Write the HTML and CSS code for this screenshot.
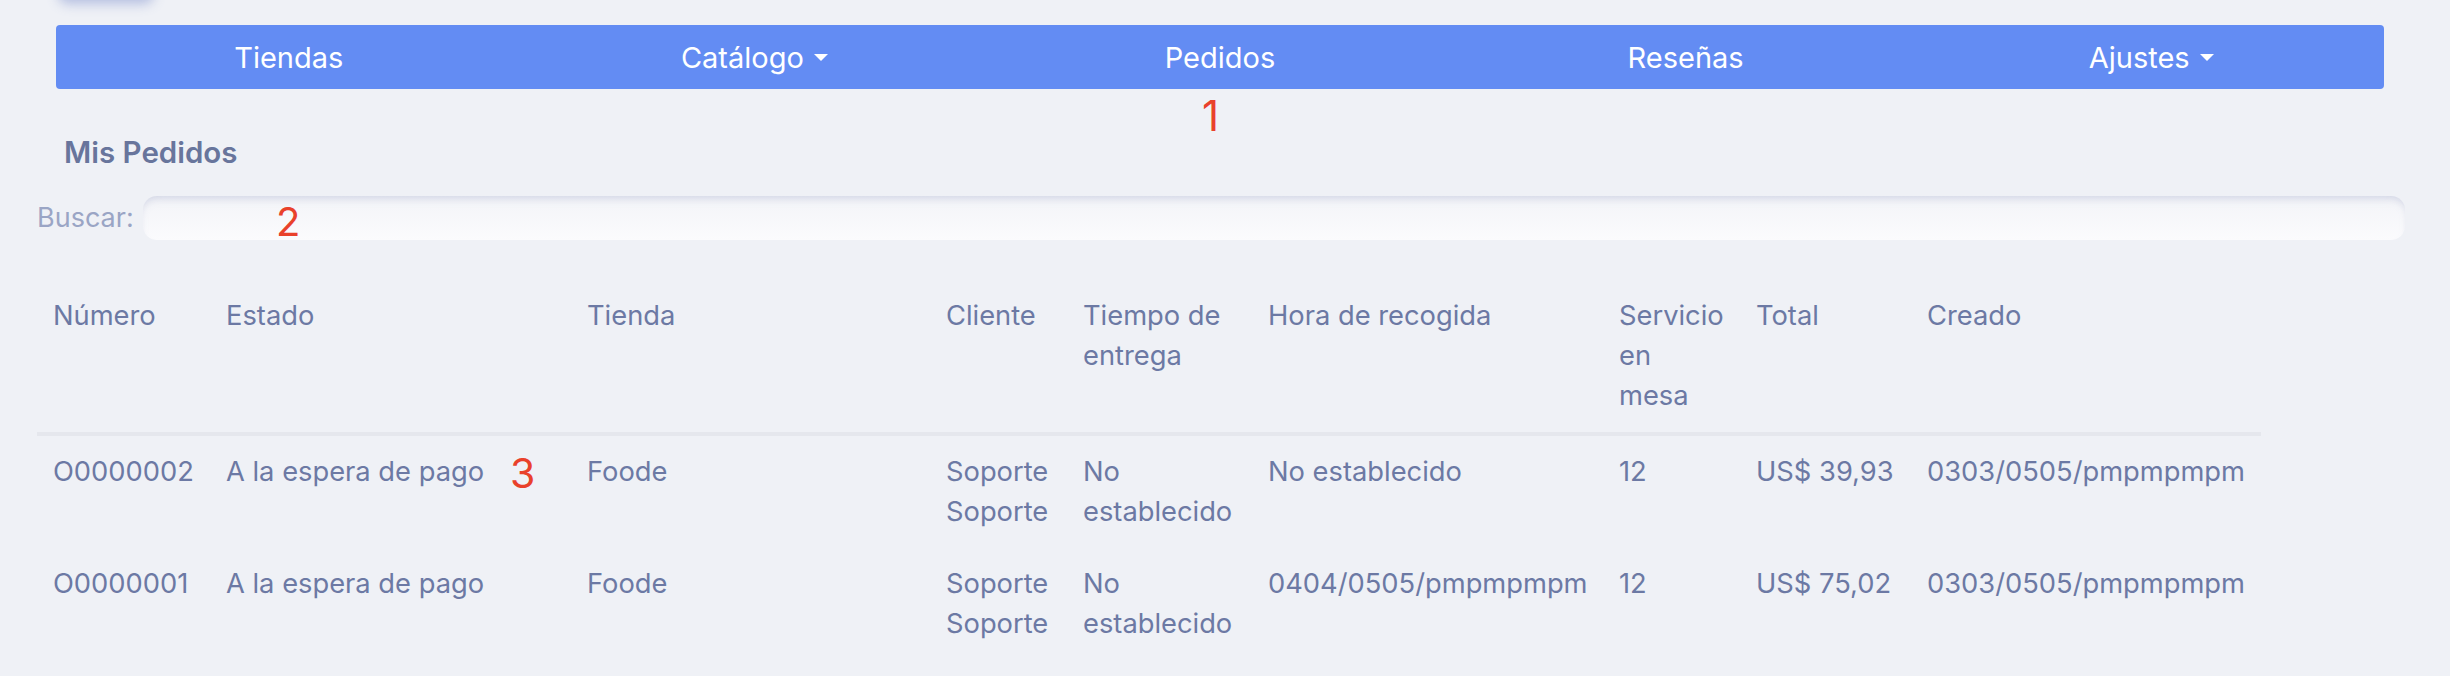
FILE: index.html
```html
<!DOCTYPE html>
<html lang="es">
<head>
<meta charset="utf-8">
<title>Mis Pedidos</title>
<link rel="stylesheet" href="styles.css">
</head>
<body>
<div class="ghost-btn"></div>
<nav class="menu">
  <a class="menu-item">Tiendas</a>
  <a class="menu-item">Catálogo<span class="caret"></span></a>
  <a class="menu-item">Pedidos</a>
  <a class="menu-item">Reseñas</a>
  <a class="menu-item">Ajustes<span class="caret"></span></a>
</nav>
<h2 class="title">Mis Pedidos</h2>
<div class="search">
  <label class="search-label">Buscar:</label>
  <input class="search-input" type="text">
</div>
<table class="orders">
  <colgroup>
    <col class="c-num"><col class="c-estado"><col class="c-tienda"><col class="c-cliente"><col class="c-tiempo"><col class="c-hora"><col class="c-serv"><col class="c-total"><col class="c-creado">
  </colgroup>
  <thead>
    <tr>
      <th>Número</th>
      <th>Estado</th>
      <th>Tienda</th>
      <th>Cliente</th>
      <th>Tiempo de entrega</th>
      <th>Hora de recogida</th>
      <th><span class="stack">Servicio en mesa</span></th>
      <th>Total</th>
      <th>Creado</th>
    </tr>
  </thead>
  <tbody>
    <tr>
      <td>O0000002</td>
      <td>A la espera de pago</td>
      <td>Foode</td>
      <td>Soporte Soporte</td>
      <td>No establecido</td>
      <td class="nw">No establecido</td>
      <td>12</td>
      <td class="nw">US$ 39,93</td>
      <td class="nw">0303/0505/pmpmpmpm</td>
    </tr>
    <tr>
      <td>O0000001</td>
      <td>A la espera de pago</td>
      <td>Foode</td>
      <td>Soporte Soporte</td>
      <td>No establecido</td>
      <td class="nw">0404/0505/pmpmpmpm</td>
      <td>12</td>
      <td class="nw">US$ 75,02</td>
      <td class="nw">0303/0505/pmpmpmpm</td>
    </tr>
  </tbody>
</table>
<span class="mark mark-1">1</span>
<span class="mark mark-2">2</span>
<span class="mark mark-3">3</span>
</body>
</html>
```
FILE: styles.css
```css
html, body {
  margin: 0;
  padding: 0;
}
body {
  background: #eff1f6;
  font-family: Inter, "Noto Sans", sans-serif;
  color: #6c79a4;
  width: 2450px;
  height: 676px;
  overflow: hidden;
  position: relative;
}
.ghost-btn {
  width: 96px;
  height: 30px;
  margin: -30px 0 0 58px;
  border-radius: 10px;
  background: #eff1f6;
  box-shadow: 0 4px 12px rgba(110, 130, 200, 0.45);
}
.menu {
  display: flex;
  margin: 25px 0 0 56px;
  width: 2328px;
  height: 64px;
  background: #638cf3;
  border-radius: 4px;
}
.menu-item {
  flex: 1;
  display: flex;
  align-items: center;
  justify-content: center;
  color: #ffffff;
  font-size: 29px;
  cursor: pointer;
}
.caret {
  display: inline-block;
  width: 0;
  height: 0;
  margin-left: 10px;
  border-top: 7px solid #ffffff;
  border-left: 7px solid transparent;
  border-right: 7px solid transparent;
}
.title {
  margin: 43px 0 0 64px;
  font-size: 29.5px;
  line-height: 40px;
  font-weight: 600;
  color: #68759c;
}
.search {
  display: flex;
  align-items: center;
  margin: 24px 0 0 37px;
  width: 2368px;
  gap: 9px;
}
.search-label {
  font-size: 27px;
  line-height: 40px;
  color: #9aa5c5;
}
.search-input {
  flex: 1;
  height: 44px;
  box-sizing: border-box;
  border: none;
  border-radius: 14px;
  background: linear-gradient(#f3f4f8, #fbfbfd);
  box-shadow: inset 0 6px 8px -4px rgba(140, 150, 190, 0.35);
  outline: none;
}
.orders {
  margin: 40px 0 0 37px;
  border-collapse: collapse;
  table-layout: fixed;
  width: 2224px;
  font-size: 27.3px;
  line-height: 40px;
}
.c-num { width: 173px; }
.c-estado { width: 361px; }
.c-tienda { width: 359px; }
.c-cliente { width: 137px; }
.c-tiempo { width: 185px; }
.c-hora { width: 351px; }
.c-serv { width: 137px; }
.c-total { width: 171px; }
.c-creado { width: 350px; }
.orders th,
.orders td {
  padding: 16px;
  text-align: left;
  vertical-align: top;
  font-weight: 400;
}
.orders thead th {
  border-bottom: 4px solid #e5e7ed;
}
.stack {
  display: block;
  width: min-content;
}
.nw {
  white-space: nowrap;
}
.mark {
  position: absolute;
  color: #e9412b;
  line-height: 1;
}
.mark-1 {
  left: 1202px;
  top: 95px;
  font-size: 42px;
}
.mark-2 {
  left: 276px;
  top: 202px;
  font-size: 40px;
}
.mark-3 {
  left: 510px;
  top: 453px;
  font-size: 41px;
}
```
